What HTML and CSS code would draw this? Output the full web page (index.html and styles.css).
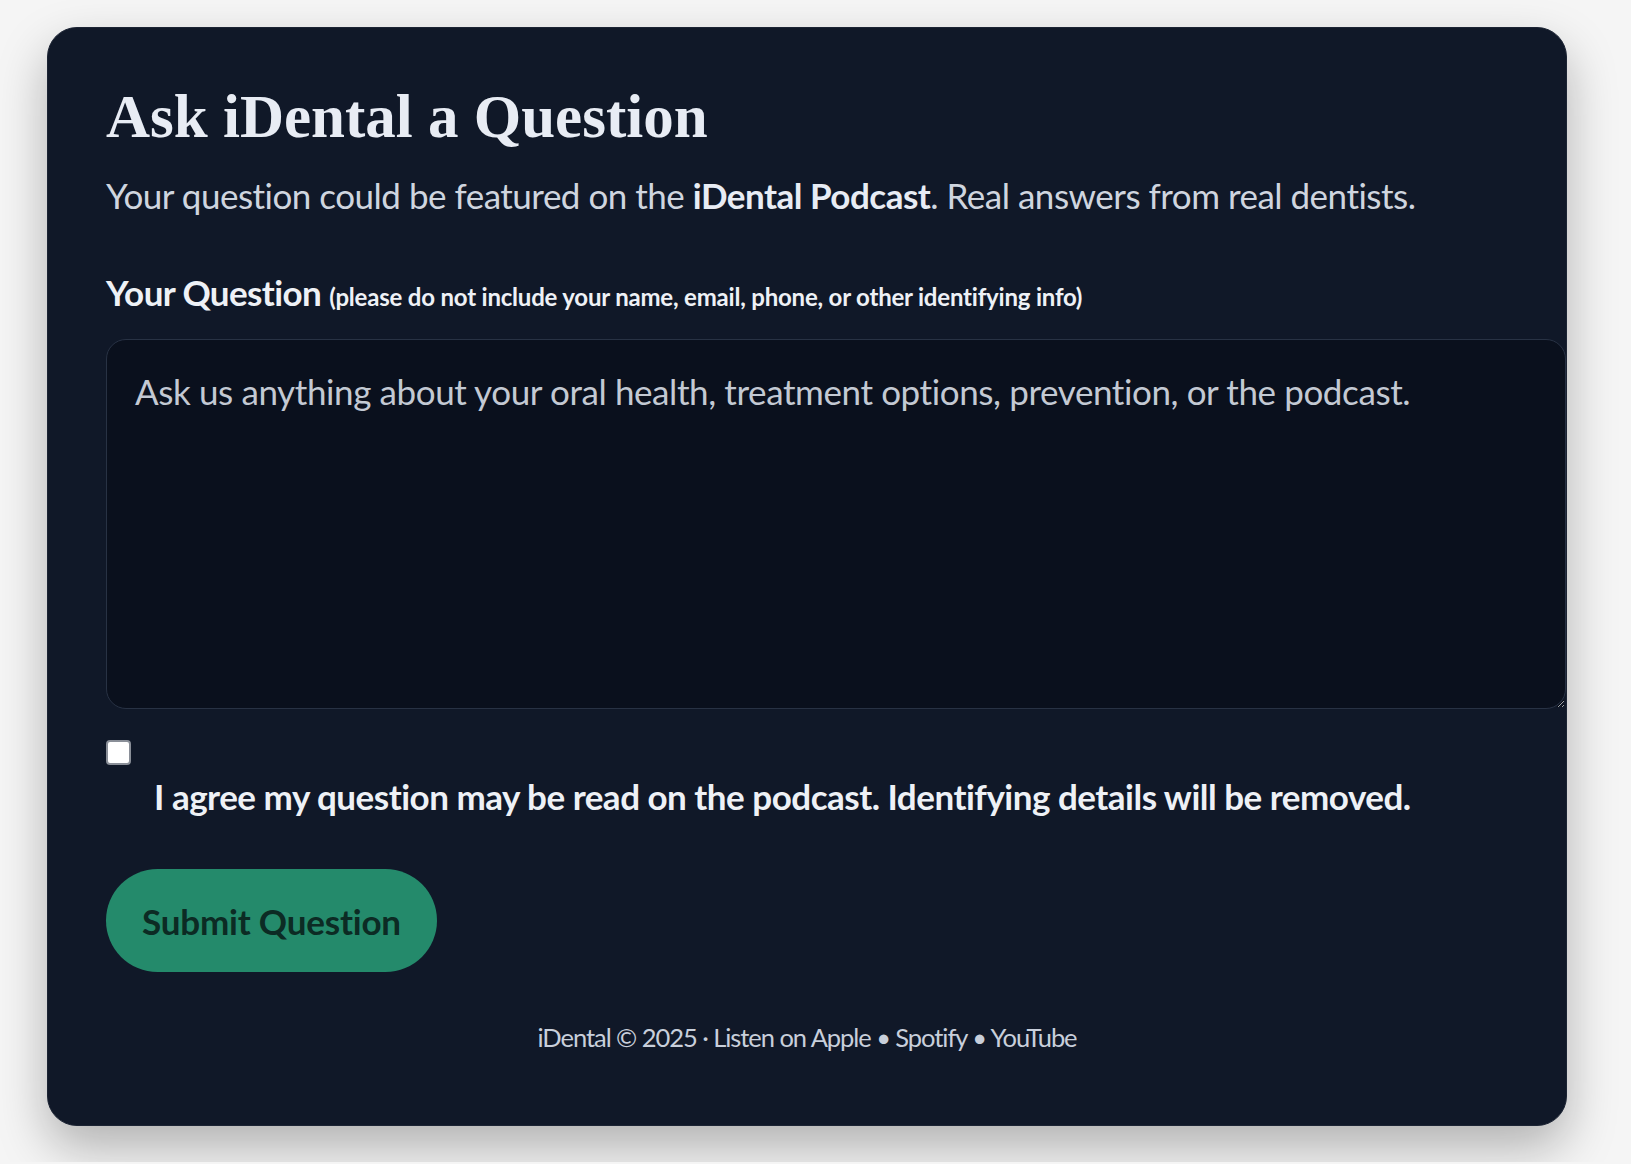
FILE: index.html
```html
<!DOCTYPE html>
<html lang="en">
<head>
    <meta charset="UTF-8">
    <meta name="viewport" content="width=device-width, initial-scale=1.0">
    <title>Ask iDental a Question</title>
    <link rel="stylesheet" href="styles.css">
</head>
<body>
    <div class="card">
        <h1>Ask iDental a Question</h1>
        <p class="lead">Your question could be featured on the <strong>iDental Podcast</strong>. Real answers from real dentists.</p>

        <form class="ask-form" onsubmit="return false;">
            <label class="field-label" for="question">Your Question <small>(please do not include your name, email, phone, or other identifying info)</small></label>
            <textarea id="question" placeholder="Ask us anything about your oral health, treatment options, prevention, or the podcast."></textarea>

            <div class="consent">
                <input type="checkbox" id="agree">
                <label for="agree">I agree my question may be read on the podcast. Identifying details will be removed.</label>
            </div>

            <button type="submit" class="submit-button">Submit Question</button>
        </form>

        <footer>
            iDental &copy; 2025 &middot; Listen on Apple &bull; Spotify &bull; YouTube
        </footer>
    </div>
</body>
</html>
```

FILE: styles.css
```css
body {
    margin: 0;
    padding: 27px 64px 36px 47px;
    background-color: #f5f5f5;
    font-family: Lato, "Open Sans", sans-serif;
}
.card {
    width: 1520px;
    box-sizing: border-box;
    padding: 52px 58px 69px 58px;
    background-color: #101828;
    border: 1px solid #1c2434;
    border-radius: 30px;
    box-shadow: 0 22px 50px rgba(0, 0, 0, 0.28);
    color: #e8ecf4;
}
h1 {
    margin: 0;
    font-family: "Liberation Serif", serif;
    font-size: 61px;
    line-height: 1.2;
    font-weight: bold;
    color: #e8ecf4;
}
.lead {
    margin: 18px 0 0 0;
    font-size: 35px;
    line-height: 1.4;
    letter-spacing: -0.5px;
    color: #cfd5df;
}
.lead strong {
    color: #e8ecf4;
}
.ask-form {
    margin-top: 48px;
}
.field-label {
    display: block;
    font-size: 35px;
    line-height: 1.4;
    font-weight: bold;
    letter-spacing: -0.6px;
    color: #eef1f6;
}
.field-label small {
    font-size: 24px;
    letter-spacing: -0.2px;
}
textarea {
    display: block;
    width: 100%;
    height: 312px;
    margin-top: 22px;
    padding: 30px 28px 26px 28px;
    background-color: #0a101d;
    border: 1px solid #283244;
    border-radius: 20px;
    color: #e8ecf4;
    font-family: Lato, "Open Sans", sans-serif;
    font-size: 35px;
    letter-spacing: -0.4px;
}
textarea::placeholder {
    color: #c3c9d3;
}
.consent {
    margin-top: 31px;
}
.consent input {
    display: block;
    width: 25px;
    height: 25px;
    margin: 0;
    appearance: none;
    background-color: #ffffff;
    border: 2px solid #8a8f98;
    border-radius: 4px;
}
.consent label {
    display: block;
    margin-top: 7px;
    padding-left: 48px;
    font-size: 35px;
    line-height: 1.4;
    font-weight: bold;
    letter-spacing: -0.5px;
    color: #eef1f6;
}
.submit-button {
    display: block;
    height: 103px;
    margin-top: 48px;
    padding: 0 36px;
    background-color: #248a6b;
    border: none;
    border-radius: 52px;
    color: #0c2b24;
    font-family: Lato, "Open Sans", sans-serif;
    font-size: 35px;
    font-weight: bold;
    letter-spacing: -0.2px;
    cursor: pointer;
}
footer {
    margin-top: 47px;
    text-align: center;
    font-size: 25.5px;
    line-height: 1.45;
    letter-spacing: -1.05px;
    color: #c8cfdb;
}
```
